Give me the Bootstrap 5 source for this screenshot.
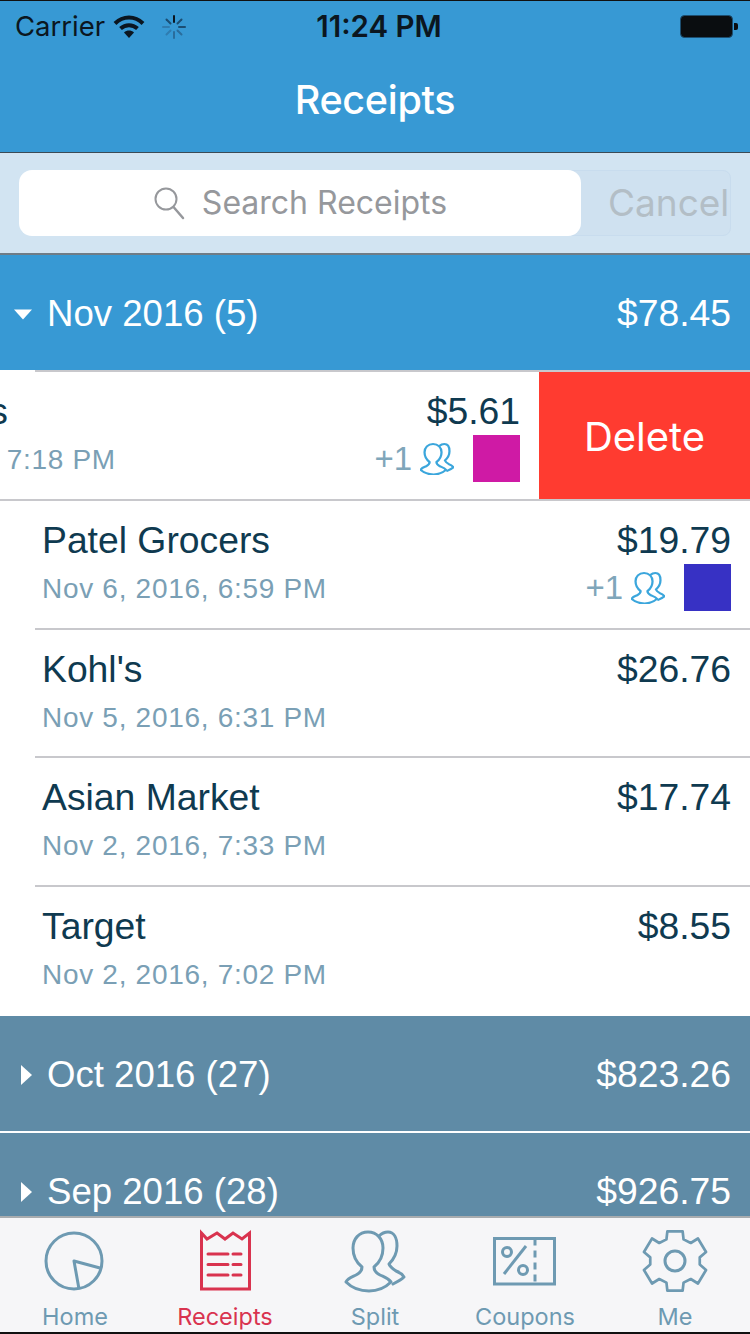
<!DOCTYPE html>
<html lang="en">
<head>
    <meta charset="UTF-8">
    <meta name="viewport" content="width=device-width, initial-scale=1.0">
    <title>Receipts</title>
    <link href="https://cdn.jsdelivr.net/npm/bootstrap@5.3.0/dist/css/bootstrap.min.css" rel="stylesheet">
    <style>
        html, body { margin: 0; height: 1334px; overflow: hidden; }
        body { font-family: "Liberation Sans", Arial, sans-serif; color: #0f3a50; background: #fff; }
        .app-frame { width: 750px; height: 1334px; overflow: hidden; border-top: 1px solid #111; border-bottom: 2px solid #111; }
        .app-top { background: #3799d4; height: 152px; border-bottom: 1px solid #3b4a55; }
        .status-bar { height: 50px; padding: 1px 10px 0 15px; font-family: Inter, sans-serif; font-size: 27.5px; color: #0b1620; }
        .status-left { width: 269px; flex: none; }
        .status-mid { font-weight: 600; width: 190px; flex: none; text-align: center; font-size: 29.5px; }
        .status-right { flex: 1 1 auto; }
        .nav-title { font-family: Inter, sans-serif; font-size: 39.5px; font-weight: 500; color: #fff; height: 100px; letter-spacing: -.3px; }
        .search-zone { height: 102px; background: #d2e4f2; border-bottom: 2px solid #6f7c86; padding: 17px 19px; }
        .search-field { width: 562px; height: 66px; background: #fff; border-radius: 13px; font-family: Inter, sans-serif; font-size: 32px; color: #96989c; gap: 17px; z-index: 1; }
        .cancel-btn { height: 66px; width: 160px; margin-left: -10px; padding-left: 36px; background: #cfe1f0; border: 1px solid #c8dcee; border-radius: 0 8px 8px 0; font-family: Inter, sans-serif; font-size: 37px; color: #b3bec6; white-space: nowrap; overflow: hidden; }
        .group-head { height: 115px; padding: 2px 19px 0 14px; color: #fff; font-size: 37.3px; }
        .group-open { background: #3799d4; }
        .group-shut { background: #5f8ba6; }
        .group-gap { height: 2px; background: #fff; }
        .group-gap-line { height: 2px; margin-left: 35px; background: #c8c8cc; }
        .group-label { gap: 15px; font-size: 36.6px; padding-top: 2px; }
        .arrow-box { width: 18px; }
        .rcpt-row { height: 129px; }
        .rcpt-body { height: 127px; padding: 14px 19px 0 42px; flex: 0 0 750px; }
        .rcpt-short .rcpt-body { height: 126px; }
        .rcpt-line { margin-left: 35px; height: 2px; background: #c8c8cc; }
        .rcpt-name { font-size: 37.3px; line-height: 50px; color: #0f3a50; white-space: nowrap; }
        .rcpt-date { font-size: 28px; line-height: 48px; color: #7a9fb5; letter-spacing: .7px; white-space: nowrap; }
        .rcpt-short { height: 128px; }
        .rcpt-right { text-align: right; }
        .split-mark { gap: 8px; height: 47px; margin-top: -1px; }
        .split-plus { font-size: 33px; color: #7fa6ba; }
        .swatch { width: 47px; height: 47px; margin-left: 11px; }
        .swatch-pink { background: #cf1aa5; }
        .swatch-blue { background: #3731c4; }
        .swipe-wrap { overflow: hidden; height: 127px; }
        .swipe-inner { margin-left: -211px; }
        .delete-btn { flex: 0 0 211px; height: 127px; padding-top: 2px; background: #ff3b30; color: #fff; font-family: Inter, sans-serif; font-size: 40px; }
        .rows-clip { height: 0; flex: 1 1 auto; overflow: hidden; }
        .tab-strip { height: 116px; flex: none; background: #f6f6f8; border-top: 2px solid #a8acaf; }
        .tab-cell { flex: 0 0 150px; color: #6e9ab2; font-family: Inter, sans-serif; font-size: 23.5px; line-height: 26px; padding-top: 12px; }
        .tab-cell svg { display: block; height: 74px; width: 84px; overflow: visible; }
        .tab-on { color: #d9334f; }
    </style>
</head>
<body>
    <div class="app-frame d-flex flex-column">
        <div class="app-top">
            <div class="status-bar d-flex align-items-center">
                <div class="status-left d-flex align-items-center gap-2">
                    <span>Carrier</span>
                    <svg width="32" height="24" viewBox="0 0 32 24"><path d="M2 8.500C10 .5 22 .5 30 8.500" fill="none" stroke="#0b1620" stroke-width="4"/><path d="M7.500 13.500C12.500 9 19.500 9 24.500 13.500" fill="none" stroke="#0b1620" stroke-width="4"/><path d="M11 17.500L16 23l5-5.500c-3-2.600-7-2.600-10 0z" fill="#0b1620"/></svg>
                    <svg width="26" height="26" viewBox="0 0 26 26" class="ms-2"><g stroke-width="2" stroke-linecap="round"><path d="M13 2v6" stroke="#0b1620"/><path d="M20.500 5.500l-4 4" stroke="#1b4e73"/><path d="M24 13h-6" stroke="#1b4e73"/><path d="M20.500 20.500l-4-4" stroke="#2a6d9c"/><path d="M13 24v-6" stroke="#2a6d9c"/><path d="M5.500 20.500l4-4" stroke="#2f7cb0"/><path d="M2 13h6" stroke="#2f7cb0"/><path d="M5.500 5.500l4 4" stroke="#1b4e73"/></g></svg>
                </div>
                <div class="status-mid">11:24 PM</div>
                <div class="status-right d-flex justify-content-end">
                    <svg width="60" height="24" viewBox="0 0 60 24"><rect x=".5" y=".5" width="52" height="22" rx="4" fill="#0a0d10" stroke="#1d4e70"/><path d="M54 8h2a2 2 0 0 1 2 2v3a2 2 0 0 1-2 2h-2z" fill="#0a0d10"/></svg>
                </div>
            </div>
            <div class="nav-title d-flex align-items-center justify-content-center">Receipts</div>
        </div>

        <div class="search-zone d-flex">
            <div class="search-field d-flex align-items-center justify-content-center">
                <svg width="32" height="34" viewBox="0 0 32 34"><circle cx="13" cy="13" r="10.500" fill="none" stroke="#96989c" stroke-width="2"/><path d="M20.500 21L30 32" stroke="#96989c" stroke-width="2.500" stroke-linecap="round"/></svg>
                <span>Search Receipts</span>
            </div>
            <div class="cancel-btn d-flex align-items-center">Cancel</div>
        </div>

        <div class="rows-clip">
            <div class="group-head group-open d-flex align-items-center justify-content-between">
                <div class="group-label d-flex align-items-center">
                    <span class="arrow-box d-flex"><svg width="20" height="11" viewBox="0 0 20 11"><path d="M0 0h20L10 11z" fill="#fff"/></svg></span>
                    <span>Nov 2016 (5)</span>
                </div>
                <span>$78.45</span>
            </div>
            <div class="group-gap-line"></div>

            <div class="rcpt-row">
                <div class="swipe-wrap">
                    <div class="swipe-inner d-flex">
                        <div class="rcpt-body d-flex justify-content-between">
                            <div>
                                <div class="rcpt-name">Walgreens</div>
                                <div class="rcpt-date">Nov 6, 2016, 7:18 PM</div>
                            </div>
                            <div class="rcpt-right">
                                <div class="rcpt-name">$5.61</div>
                                <div class="split-mark d-flex align-items-center justify-content-end">
                                    <span class="split-plus">+1</span>
                                    <svg width="34" height="32" viewBox="12 0 60 62" preserveAspectRatio="none"><g fill="none" stroke="#3ba6dc" stroke-width="4" stroke-linejoin="round" stroke-linecap="round"><path d="M35 2C26 2 20 9 20 18C20 26 24 33 29 37C29 41 27 43 23 45C19 47 15 48 13 52C19 58 27 61 36 61C44 61 52 58 58 52C55 48 51 47 47 45C43 43 41 41 41 37C46 33 50 26 50 18C50 9 44 2 35 2Z"/><path d="M46 6C49 3 52 2 55 2C61 2 64 8 64 16C64 24 60 30 56 34C57 37 60 39 63 41C66 42 69 44 71 47C68 50 64 52 60 54"/></g></svg>
                                    <span class="swatch swatch-pink"></span>
                                </div>
                            </div>
                        </div>
                        <div class="delete-btn d-flex align-items-center justify-content-center">Delete</div>
                    </div>
                </div>
                <div class="rcpt-line m-0"></div>
            </div>

            <div class="rcpt-row">
                <div class="rcpt-body d-flex justify-content-between">
                    <div>
                        <div class="rcpt-name">Patel Grocers</div>
                        <div class="rcpt-date">Nov 6, 2016, 6:59 PM</div>
                    </div>
                    <div class="rcpt-right">
                        <div class="rcpt-name">$19.79</div>
                        <div class="split-mark d-flex align-items-center justify-content-end">
                            <span class="split-plus">+1</span>
                            <svg width="34" height="32" viewBox="12 0 60 62" preserveAspectRatio="none"><g fill="none" stroke="#3ba6dc" stroke-width="4" stroke-linejoin="round" stroke-linecap="round"><path d="M35 2C26 2 20 9 20 18C20 26 24 33 29 37C29 41 27 43 23 45C19 47 15 48 13 52C19 58 27 61 36 61C44 61 52 58 58 52C55 48 51 47 47 45C43 43 41 41 41 37C46 33 50 26 50 18C50 9 44 2 35 2Z"/><path d="M46 6C49 3 52 2 55 2C61 2 64 8 64 16C64 24 60 30 56 34C57 37 60 39 63 41C66 42 69 44 71 47C68 50 64 52 60 54"/></g></svg>
                            <span class="swatch swatch-blue"></span>
                        </div>
                    </div>
                </div>
                <div class="rcpt-line"></div>
            </div>

            <div class="rcpt-row rcpt-short">
                <div class="rcpt-body d-flex justify-content-between">
                    <div>
                        <div class="rcpt-name">Kohl's</div>
                        <div class="rcpt-date">Nov 5, 2016, 6:31 PM</div>
                    </div>
                    <div class="rcpt-name">$26.76</div>
                </div>
                <div class="rcpt-line"></div>
            </div>

            <div class="rcpt-row">
                <div class="rcpt-body d-flex justify-content-between">
                    <div>
                        <div class="rcpt-name">Asian Market</div>
                        <div class="rcpt-date">Nov 2, 2016, 7:33 PM</div>
                    </div>
                    <div class="rcpt-name">$17.74</div>
                </div>
                <div class="rcpt-line"></div>
            </div>

            <div class="rcpt-row">
                <div class="rcpt-body d-flex justify-content-between">
                    <div>
                        <div class="rcpt-name">Target</div>
                        <div class="rcpt-date">Nov 2, 2016, 7:02 PM</div>
                    </div>
                    <div class="rcpt-name">$8.55</div>
                </div>
            </div>

            <div class="group-head group-shut d-flex align-items-center justify-content-between">
                <div class="group-label d-flex align-items-center">
                    <span class="arrow-box d-flex justify-content-end"><svg width="11" height="20" viewBox="0 0 11 20"><path d="M0 0l11 10L0 20z" fill="#fff"/></svg></span>
                    <span>Oct 2016 (27)</span>
                </div>
                <span>$823.26</span>
            </div>
            <div class="group-gap"></div>
            <div class="group-head group-shut d-flex align-items-center justify-content-between">
                <div class="group-label d-flex align-items-center">
                    <span class="arrow-box d-flex justify-content-end"><svg width="11" height="20" viewBox="0 0 11 20"><path d="M0 0l11 10L0 20z" fill="#fff"/></svg></span>
                    <span>Sep 2016 (28)</span>
                </div>
                <span>$926.75</span>
            </div>
        </div>

        <div class="tab-strip d-flex">
            <div class="tab-cell d-flex flex-column align-items-center">
                <svg viewBox="0 0 84 74"><g fill="none" stroke="#6e9ab2" stroke-width="3" stroke-linejoin="round"><circle cx="41" cy="31" r="28"/><path d="M67 38L41 31L46 59"/></g></svg>
                <span>Home</span>
            </div>
            <div class="tab-cell tab-on d-flex flex-column align-items-center">
                <svg viewBox="0 0 84 74"><g fill="none" stroke="#d9334f" stroke-width="3"><path d="M18.500 3L24 9l10-6 8 6 8-6 9 6 7.500-6v56h-48z"/><path d="M25 24h20M50 24h8M25 34.500h20M50 34.500h8M25 45h20M50 45h8" stroke-linecap="round"/></g></svg>
                <span>Receipts</span>
            </div>
            <div class="tab-cell d-flex flex-column align-items-center">
                <svg viewBox="0 0 84 74"><g fill="none" stroke="#6e9ab2" stroke-width="3" stroke-linejoin="round" stroke-linecap="round"><path d="M35 2C26 2 20 9 20 18C20 26 24 33 29 37C29 41 27 43 23 45C19 47 15 48 13 52C19 58 27 61 36 61C44 61 52 58 58 52C55 48 51 47 47 45C43 43 41 41 41 37C46 33 50 26 50 18C50 9 44 2 35 2Z"/><path d="M46 6C49 3 52 2 55 2C61 2 64 8 64 16C64 24 60 30 56 34C57 37 60 39 63 41C66 42 69 44 71 47C68 50 64 52 60 54"/></g></svg>
                <span>Split</span>
            </div>
            <div class="tab-cell d-flex flex-column align-items-center">
                <svg viewBox="0 0 84 74"><g fill="none" stroke="#6e9ab2" stroke-width="3"><rect x="11.500" y="8.500" width="60" height="45.500"/><path d="M52 8.500V54" stroke-dasharray="7 5"/><circle cx="24" cy="22" r="4.500"/><circle cx="40" cy="40" r="4.500"/><path d="M43 16L21 44"/></g></svg>
                <span>Coupons</span>
            </div>
            <div class="tab-cell d-flex flex-column align-items-center">
                <svg viewBox="0 0 84 74"><g fill="none" stroke="#6e9ab2" stroke-width="3" stroke-linejoin="round"><path transform="translate(42 31) scale(.9) translate(-41.500 -36)" d="M33 3h17l1 9 8 4 8-5 9 15-7 6v8l7 6-9 15-8-5-8 4-1 9H33l-1-9-8-4-8 5-9-15 7-6v-8l-7-6 9-15 8 5 8-4z"/><circle cx="42" cy="31" r="10"/></g></svg>
                <span>Me</span>
            </div>
        </div>
    </div>
    <script src="https://cdn.jsdelivr.net/npm/bootstrap@5.3.0/dist/js/bootstrap.bundle.min.js"></script>
</body>
</html>
